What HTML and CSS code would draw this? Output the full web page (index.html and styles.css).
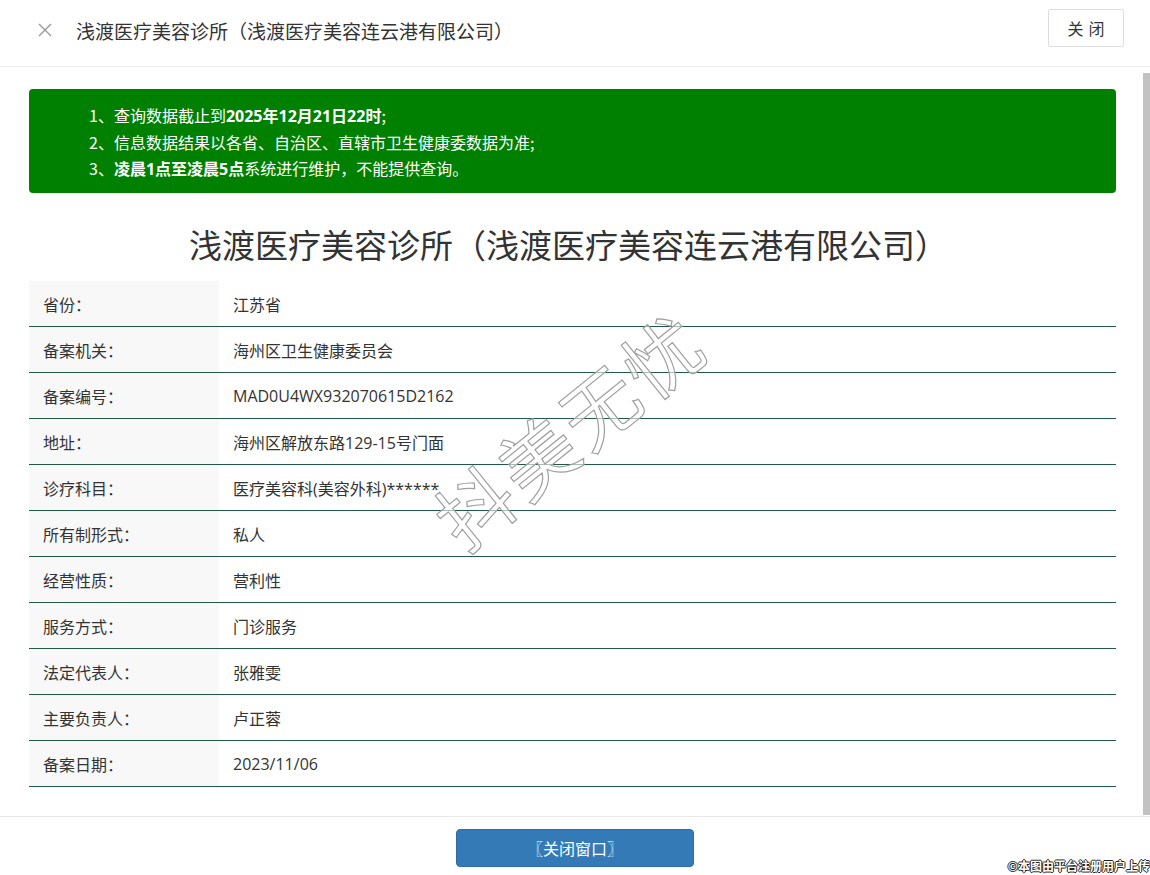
FILE: index.html
```html
<!DOCTYPE html>
<html lang="zh-CN">
<head>
<meta charset="utf-8">
<title>浅渡医疗美容诊所</title>
<link rel="stylesheet" href="styles.css">
</head>
<body>
<div class="page">
  <header class="topbar">
    <span class="x-icon">
      <svg width="14" height="14" viewBox="0 0 14 14"><path d="M1 1 L13 13 M13 1 L1 13" stroke="#9a9a9a" stroke-width="1.4" fill="none"/></svg>
    </span>
    <h1 class="top-title">浅渡医疗美容诊所（浅渡医疗美容连云港有限公司）</h1>
    <button class="close-btn">关闭</button>
  </header>
  <div class="body-area">
    <main class="content">
      <div class="notice">
        <p>1、查询数据截止到<b>2025年12月21日22时</b>;</p>
        <p>2、信息数据结果以各省、自治区、直辖市卫生健康委数据为准;</p>
        <p>3、<b>凌晨1点至凌晨5点</b>系统进行维护，不能提供查询。</p>
      </div>
      <h2 class="org-title">浅渡医疗美容诊所（浅渡医疗美容连云港有限公司）</h2>
      <div class="info">
        <div class="row"><div class="label">省份：</div><div class="value">江苏省</div></div>
        <div class="row"><div class="label">备案机关：</div><div class="value">海州区卫生健康委员会</div></div>
        <div class="row"><div class="label">备案编号：</div><div class="value">MAD0U4WX932070615D2162</div></div>
        <div class="row"><div class="label">地址：</div><div class="value">海州区解放东路129-15号门面</div></div>
        <div class="row"><div class="label">诊疗科目：</div><div class="value">医疗美容科(美容外科)******</div></div>
        <div class="row"><div class="label">所有制形式：</div><div class="value">私人</div></div>
        <div class="row"><div class="label">经营性质：</div><div class="value">营利性</div></div>
        <div class="row"><div class="label">服务方式：</div><div class="value">门诊服务</div></div>
        <div class="row"><div class="label">法定代表人：</div><div class="value">张雅雯</div></div>
        <div class="row"><div class="label">主要负责人：</div><div class="value">卢正蓉</div></div>
        <div class="row"><div class="label">备案日期：</div><div class="value">2023/11/06</div></div>
      </div>
    </main>
    <div class="scrollbar"><div class="thumb"></div></div>
  </div>
  <footer class="footer">
    <button class="close-window">〖关闭窗口〗</button>
  </footer>
  <div class="watermark">抖美无忧</div>
  <div class="credit">©本图由平台注册用户上传</div>
</div>
</body>
</html>
```
FILE: styles.css
```css
html, body {
  margin: 0;
  padding: 0;
  background: #fff;
}
body {
  font-family: "Open Sans", "Noto Sans CJK SC", sans-serif;
  color: #333;
}
.page {
  position: relative;
  width: 1150px;
  height: 875px;
  display: flex;
  flex-direction: column;
  overflow: hidden;
}
.topbar {
  height: 66px;
  flex: none;
  border-bottom: 1px solid #eeeeee;
  display: flex;
  align-items: center;
  padding: 0 26px 0 38px;
}
.x-icon {
  width: 14px;
  height: 14px;
  display: flex;
  margin-top: -6px;
}
.top-title {
  margin: 0 0 4px 24px;
  font-size: 19px;
  font-weight: normal;
  font-family: "Noto Sans CJK SC", sans-serif;
  color: #333;
  flex: 1;
  line-height: 24px;
}
.close-btn {
  width: 76px;
  height: 38px;
  margin-top: -10px;
  background: #fff;
  border: 1px solid #dddddd;
  border-radius: 2px;
  font-family: "Noto Sans CJK SC", sans-serif;
  font-size: 16px;
  letter-spacing: 5px;
  padding: 0 0 0 5px;
  color: #333;
}
.body-area {
  flex: 1;
  display: flex;
  min-height: 0;
}
.content {
  flex: 1;
  overflow: hidden;
  padding: 22px 27px 0 29px;
}
.scrollbar {
  width: 7px;
  flex: none;
  padding-top: 6px;
}
.thumb {
  height: 742px;
  background: #c2c2c2;
}
.notice {
  background: #008000;
  border-radius: 4px;
  color: #fff;
  padding: 13px 0 11px 60px;
  font-size: 16px;
  font-family: "Noto Sans CJK SC", sans-serif;
}
.notice p {
  margin: 0;
  line-height: 26px;
}
.notice b {
  font-weight: bold;
  font-family: "Open Sans", "Noto Sans CJK SC", sans-serif;
}
.org-title {
  margin: 29px 0 15px;
  padding-right: 8px;
  text-align: center;
  font-size: 33px;
  line-height: 44px;
  font-weight: normal;
  font-family: "Noto Sans CJK SC", sans-serif;
  color: #333;
}
.info {
  display: flex;
  flex-direction: column;
}
.row {
  display: flex;
  height: 45px;
  border-bottom: 1px solid #1f5a46;
  font-size: 16px;
}
.label {
  width: 176px;
  padding-left: 14px;
  background: #f8f8f8;
  display: flex;
  align-items: center;
  font-family: "Noto Sans CJK SC", sans-serif;
}
.value {
  flex: 1;
  padding-left: 14px;
  display: flex;
  align-items: center;
}
.footer {
  height: 59px;
  flex: none;
  border-top: 1px solid #e8e8e8;
  display: flex;
  justify-content: center;
  padding-top: 12px;
  box-sizing: border-box;
}
.close-window {
  width: 238px;
  height: 38px;
  background: #337ab7;
  border: 1px solid #2e6da4;
  border-radius: 4px;
  color: #fff;
  font-size: 16px;
  font-family: "Noto Sans CJK SC", sans-serif;
}
.watermark {
  position: absolute;
  left: 568px;
  top: 428px;
  transform: translate(-50%, -50%) rotate(-39deg);
  font-size: 76px;
  letter-spacing: 4px;
  font-family: "Noto Sans CJK SC", sans-serif;
  color: rgba(255,255,255,0.6);
  -webkit-text-stroke: 1.2px #a0a0a0;
  white-space: nowrap;
  pointer-events: none;
  line-height: 1;
}
.credit {
  position: absolute;
  right: 0;
  bottom: 2px;
  font-size: 12px;
  font-family: "Noto Sans CJK SC", sans-serif;
  color: #fff;
  font-weight: bold;
  text-shadow: -1px 0 #222, 1px 0 #222, 0 -1px #222, 0 1px #222;
  line-height: 14px;
}
```
